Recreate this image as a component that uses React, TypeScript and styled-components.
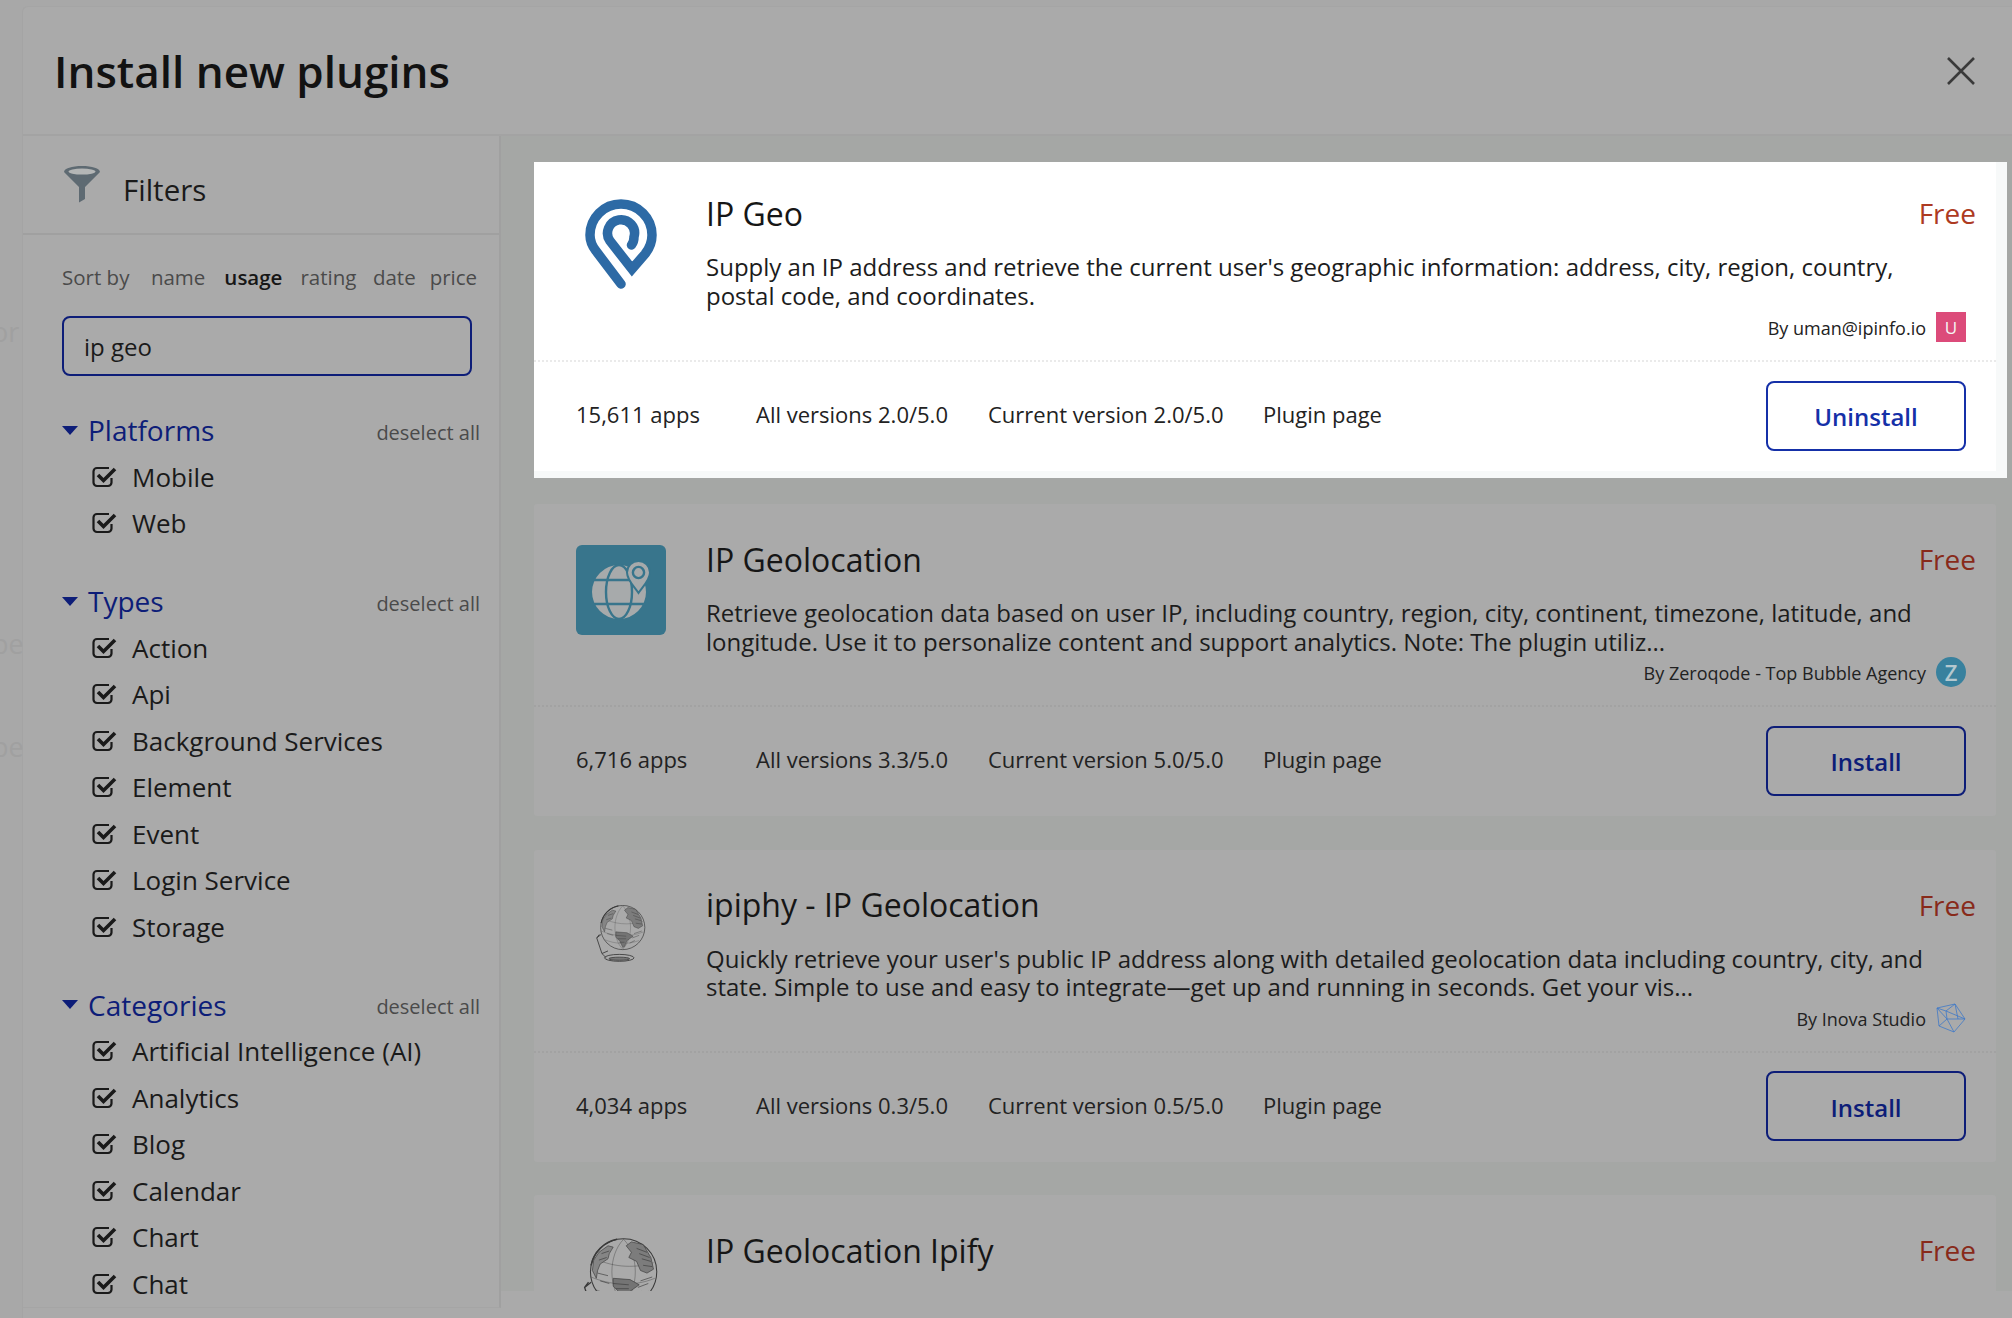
import styled, { createGlobalStyle } from "styled-components"

const GlobalStyle = createGlobalStyle`
  html, body {
    margin: 0;
    padding: 0;
    background: #a8a8a8;
    font-family: "Open Sans", "Liberation Sans", sans-serif;
    color: #1c1c1c;
  }
  * {
    box-sizing: border-box;
  }
`

const NAVY = "#0d1d78"

const Page = styled.div`
  position: relative;
  width: 2012px;
  height: 1318px;
  overflow: hidden;
  padding: 6px 0 0 22px;
`

const Ghost = styled.span<{ $top: number }>`
  position: absolute;
  left: -8px;
  top: ${(p) => p.$top}px;
  font-size: 27px;
  color: #a0a0a0;
`

const Modal = styled.div`
  display: flex;
  flex-direction: column;
  height: 1312px;
  background: #aaaaaa;
  border-top: 1px solid #a5a5a5;
  border-left: 1px solid #a4a4a4;
  border-top-left-radius: 6px;
`

const Header = styled.header`
  flex: none;
  height: 129px;
  display: flex;
  align-items: center;
  justify-content: space-between;
  padding: 0 36px 0 31px;
  border-bottom: 2px solid #a3a3a3;
`

const Heading = styled.h1`
  margin: 0;
  font-size: 44px;
  line-height: 56px;
  font-weight: 600;
  color: #121212;
`

const CloseIcon = styled.svg`
  width: 30px;
  height: 30px;
`

const Body = styled.div`
  flex: 1;
  min-height: 0;
  display: flex;
`

const Sidebar = styled.aside`
  flex: none;
  width: 478px;
  height: 1172px;
  overflow: hidden;
  border-right: 2px solid #a0a0a0;
  border-bottom: 1px solid #a5a5a5;
`

const FilterBar = styled.div`
  height: 99px;
  display: flex;
  align-items: center;
  gap: 23px;
  padding-left: 41px;
  border-bottom: 2px solid #a0a0a0;
`

const FilterTitle = styled.span`
  font-size: 29.5px;
  line-height: 40px;
  margin-top: 10px;
  color: #1a1a1a;
`

const FilterBody = styled.div`
  padding: 28px 19px 0 39px;
`

const SortRow = styled.div`
  display: flex;
  height: 28px;
  align-items: center;
  font-size: 20.5px;
  color: #4a4a4a;
  white-space: nowrap;
`

const SortLabel = styled.span`
  margin-right: 21.5px;
`

const SortItem = styled.span<{ $active?: boolean; $gap: number }>`
  margin-right: ${(p) => p.$gap}px;
  font-weight: ${(p) => (p.$active ? 600 : 400)};
  color: ${(p) => (p.$active ? "#161616" : "#4a4a4a")};
`

const SearchInput = styled.input`
  display: block;
  width: 410px;
  height: 60px;
  margin-top: 25px;
  padding: 0 20px;
  border: 2px solid ${NAVY};
  border-radius: 8px;
  background: transparent;
  font-family: inherit;
  font-size: 24px;
  color: #1a1a1a;
  outline: none;
`

const Section = styled.section`
  margin-top: 30.5px;

  & + & {
    margin-top: 31px;
  }
`

const SectionHead = styled.div`
  height: 47px;
  display: flex;
  align-items: center;
`

const Caret = styled.span`
  width: 0;
  height: 0;
  margin-right: 10px;
  border-left: 8px solid transparent;
  border-right: 8px solid transparent;
  border-top: 9px solid ${NAVY};
`

const SectionTitle = styled.span`
  flex: 1;
  font-size: 28px;
  color: ${NAVY};
`

const Deselect = styled.span`
  font-size: 20px;
  color: #4a4a4a;
  margin-top: 4px;
`

const OptionRow = styled.div`
  height: 46.5px;
  display: flex;
  align-items: center;
  gap: 14px;
  padding-left: 30px;
  font-size: 26px;
  color: #1a1a1a;
`

const List = styled.main`
  flex: 1;
  min-width: 0;
  height: 1155px;
  overflow: hidden;
  padding: 22px 0 0 33px;
  background: #a5a7a5;
`

const Card = styled.article<{ $highlight?: boolean }>`
  width: 1462px;
  height: 312px;
  margin-bottom: 33.4px;
  display: flex;
  flex-direction: column;
  background: ${(p) => (p.$highlight ? "#ffffff" : "#aaaaaa")};
  border-radius: 3px;
  ${(p) =>
    p.$highlight &&
    `
    border-radius: 0;
    height: 313px;
    box-shadow: 11px 7px 0 #f7f9f9, 11px 0 0 #f7f9f9, 0 7px 0 #f7f9f9;
    clip-path: inset(4px -11px -7px 0);
  `}
`

const CardHead = styled.div<{ $highlight?: boolean }>`
  flex: none;
  height: ${(p) => (p.$highlight ? 204 : 203)}px;
  display: flex;
  padding-left: 42px;
  border-bottom: 2px dotted ${(p) => (p.$highlight ? "#eaeaea" : "#a2a2a2")};
`

const IconCell = styled.div<{ $drop: number }>`
  flex: none;
  width: 90px;
  height: 140px;
  margin: 41px 40px 0 0;
  padding-top: ${(p) => p.$drop}px;
  display: flex;
  justify-content: center;
`

const CardMain = styled.div`
  flex: 1;
  min-width: 0;
  display: flex;
  flex-direction: column;
  padding: 32px 20px 0 0;
`

const TitleRow = styled.div`
  display: flex;
  align-items: center;
  justify-content: space-between;
  height: 46px;
`

const PluginName = styled.h2`
  margin: 0;
  font-size: 32px;
  font-weight: 400;
  color: #161616;
`

const Price = styled.span<{ $bright?: boolean }>`
  font-size: 28px;
  color: ${(p) => (p.$bright ? "#ad3a22" : "#882a1a")};
`

const Description = styled.p`
  margin: 17px 0 0;
  width: 1235px;
  font-size: 24px;
  line-height: 28.5px;
  color: #1c1c1c;
`

const Author = styled.div`
  margin: auto 10px 18px 0;
  display: flex;
  justify-content: flex-end;
  align-items: center;
  gap: 10px;
  height: 30px;
  font-size: 18px;
  color: #222;
`

const AuthorName = styled.span`
  margin-top: 2px;
`

const LetterAvatar = styled.span`
  width: 30px;
  height: 30px;
  display: flex;
  align-items: center;
  justify-content: center;
  background: #dc4b7a;
  color: #f5f5f5;
  font-size: 17px;
`

const ZAvatar = styled.span`
  width: 30px;
  height: 30px;
  display: flex;
  align-items: center;
  justify-content: center;
  border-radius: 50%;
  background: #38819e;
  color: #b4c8cf;
  font-size: 22px;
  font-weight: 600;
`

const CardFoot = styled.div`
  flex: 1;
  display: flex;
  align-items: center;
  padding: 0 30px 0 42px;
  font-size: 22px;
  color: #222;
`

const AppCount = styled.span`
  width: 180px;
  margin-bottom: 5px;
`

const Stat = styled.span<{ $width: number }>`
  width: ${(p) => p.$width}px;
  margin-bottom: 5px;
`

const PluginLink = styled.span`
  margin-bottom: 5px;
`

const ActionButton = styled.button<{ $bright?: boolean }>`
  width: 200px;
  height: 70px;
  margin-left: auto;
  margin-bottom: 2px;
  padding-top: 3px;
  border: 2.5px solid ${(p) => (p.$bright ? "#1530a8" : NAVY)};
  border-radius: 8px;
  background: transparent;
  font-family: inherit;
  font-size: 24px;
  font-weight: 600;
  color: ${(p) => (p.$bright ? "#1530a8" : NAVY)};
`

function CheckIcon() {
  return (
    <svg width="26" height="22" viewBox="0 0 26 22" fill="none">
      <path
        d="M17 2H5A3.500 3.500 0 0 0 1.500 5.500v11A3.500 3.500 0 0 0 5 20h11a3.500 3.500 0 0 0 3.500-3.500V12"
        stroke="#1a1a1a"
        strokeWidth="2.2"
      />
      <path d="M6 9l5.500 5.500L23 3" stroke="#1a1a1a" strokeWidth="3.600" />
    </svg>
  )
}

function FunnelIcon() {
  return (
    <svg width="36" height="37" viewBox="0 0 36 37">
      <path
        d="M0 6C0 2.500 8 0 18 0s18 2.500 18 6L21 21v12l-6 3.500V21L0 6z"
        fill="#5e6a72"
      />
      <ellipse cx="18" cy="5.600" rx="13.500" ry="3" fill="#b4b6b6" />
    </svg>
  )
}

function PinLogo() {
  return (
    <svg width="72" height="90" viewBox="0 0 72 90" fill="none">
      <path
        d="M36 85L11 52C7 47 5 42 5 36a31 31 0 0 1 62 0c0 7-3 14-7 19L47 70 25 42a13.500 13.500 0 1 1 24-4c0 3-1 6-2.500 8"
        stroke="#2d6aa5"
        strokeWidth="9.500"
        strokeLinecap="round"
        strokeLinejoin="miter"
      />
    </svg>
  )
}

function GlobeTile() {
  const land = "#a7aaab"
  const tile = "#38758c"
  return (
    <svg width="90" height="90" viewBox="0 0 90 90">
      <rect width="90" height="90" rx="6" fill={tile} />
      <circle cx="43" cy="47" r="27" fill={land} />
      <ellipse cx="43" cy="47" rx="13" ry="27" fill="none" stroke={tile} strokeWidth="2.400" />
      <path d="M16 35h54M16 59h54" stroke={tile} strokeWidth="2.400" />
      <path
        d="M62.500 16a11.500 11.500 0 0 1 11.500 11.500C74 35 66.500 42 62.500 48 58.500 42 51 35 51 27.500A11.500 11.500 0 0 1 62.500 16z"
        fill={land}
        stroke={tile}
        strokeWidth="2"
      />
      <circle cx="62.500" cy="27.500" r="5.600" fill={land} stroke={tile} strokeWidth="2.400" />
    </svg>
  )
}

function SketchGlobe({ size }: { size: number }) {
  return (
    <svg width={size} height={size * 1.2} viewBox="0 0 60 72" fill="none" stroke="#3a3a3a">
      <circle cx="32" cy="26" r="25.500" strokeWidth="0.800" />
      <path d="M7 21a25.500 25.500 0 0 1 20-20" strokeWidth="1.200" />
      <path d="M9 15c12 7 30 9 46 4M7 30c14 6 32 8 49 1M11 40c12 5 26 6 40 1" strokeWidth="0.300" />
      <path d="M32 1c-12 12-12 38 0 50M32 1c12 12 12 38 0 50" strokeWidth="0.300" />
      <path d="M13 11l7-5 4 1-3 5-1 4-6 4-2 5-1 6-3-6 1-8z" fill="#858585" strokeWidth="0.500" />
      <path d="M38 3l9 2 6 10 2 9-5 3-5-2-3-7-6-3 2-4-4-5z" fill="#7c7c7c" strokeWidth="0.500" />
      <path d="M24 31l13 1 7 4-7 5-3 7-2 1-3-7-5-5z" fill="#747474" strokeWidth="0.500" />
      <path
        d="M42 8l8 3M44 12l8 3M46 16l7 2M47 21l7 1M24 35l12 1M26 39l10 0M28 43l6 0M15 12l6-2M13 17l6-2M45 33l9-3M43 38l8-3M40 44l6-3M12 27l8 2M14 33l7 2"
        strokeWidth="0.500"
      />
      <path d="M5 34l-3 4 6 18 5 5M2 38l5-4M8 56l7-3" strokeWidth="1" />
      <ellipse cx="28" cy="61" rx="17" ry="4" strokeWidth="1" />
      <ellipse cx="28" cy="62" rx="12" ry="1.800" strokeWidth="0.900" fill="#777" />
    </svg>
  )
}

function InovaLogo() {
  return (
    <svg width="30" height="30" viewBox="0 0 30 30" fill="none" stroke="#3f78c8" strokeWidth="0.800">
      <path d="M1 5L19 1l10 15-11 13L3 23z" />
      <path d="M1 5l9 3 9-7M10 8l19 8M10 8l1 8-8 7M11 16l7 13M11 16l18 0M19 1l3 15M11 16L1 5" />
    </svg>
  )
}

type Plugin = {
  name: string
  description: string
  author: string
  avatar: React.ReactNode
  icon: React.ReactNode
  drop: number
  apps: string
  all: string
  current: string
  action: string
}

const platforms = ["Mobile", "Web"]
const types = ["Action", "Api", "Background Services", "Element", "Event", "Login Service", "Storage"]
const categories = ["Artificial Intelligence (AI)", "Analytics", "Blog", "Calendar", "Chart", "Chat"]

const plugins: Plugin[] = [
  {
    name: "IP Geo",
    description:
      "Supply an IP address and retrieve the current user's geographic information: address, city, region, country, postal code, and coordinates.",
    author: "By uman@ipinfo.io",
    avatar: <LetterAvatar>U</LetterAvatar>,
    icon: <PinLogo />,
    drop: 0,
    apps: "15,611 apps",
    all: "2.0",
    current: "2.0",
    action: "Uninstall",
  },
  {
    name: "IP Geolocation",
    description:
      "Retrieve geolocation data based on user IP, including country, region, city, continent, timezone, latitude, and longitude. Use it to personalize content and support analytics. Note: The plugin utiliz...",
    author: "By Zeroqode - Top Bubble Agency",
    avatar: <ZAvatar>Z</ZAvatar>,
    icon: <GlobeTile />,
    drop: 0,
    apps: "6,716 apps",
    all: "3.3",
    current: "5.0",
    action: "Install",
  },
  {
    name: "ipiphy - IP Geolocation",
    description:
      "Quickly retrieve your user's public IP address along with detailed geolocation data including country, city, and state. Simple to use and easy to integrate—get up and running in seconds. Get your vis...",
    author: "By Inova Studio",
    avatar: <InovaLogo />,
    icon: <SketchGlobe size={52} />,
    drop: 14,
    apps: "4,034 apps",
    all: "0.3",
    current: "0.5",
    action: "Install",
  },
  {
    name: "IP Geolocation Ipify",
    description: "",
    author: "",
    avatar: null,
    icon: <SketchGlobe size={78} />,
    drop: 2,
    apps: "",
    all: "",
    current: "",
    action: "Install",
  },
]

function FilterSection({ title, options }: { title: string; options: string[] }) {
  return (
    <Section>
      <SectionHead>
        <Caret />
        <SectionTitle>{title}</SectionTitle>
        <Deselect>deselect all</Deselect>
      </SectionHead>
      {options.map((option) => (
        <OptionRow key={option}>
          <CheckIcon />
          {option}
        </OptionRow>
      ))}
    </Section>
  )
}

function PluginCard({ plugin, highlight }: { plugin: Plugin; highlight?: boolean }) {
  return (
    <Card $highlight={highlight}>
      <CardHead $highlight={highlight}>
        <IconCell $drop={plugin.drop}>{plugin.icon}</IconCell>
        <CardMain>
          <TitleRow>
            <PluginName>{plugin.name}</PluginName>
            <Price $bright={highlight}>Free</Price>
          </TitleRow>
          <Description>{plugin.description}</Description>
          <Author>
            <AuthorName>{plugin.author}</AuthorName>
            {plugin.avatar}
          </Author>
        </CardMain>
      </CardHead>
      <CardFoot>
        <AppCount>{plugin.apps}</AppCount>
        <Stat $width={232}>All versions {plugin.all}/5.0</Stat>
        <Stat $width={275}>Current version {plugin.current}/5.0</Stat>
        <PluginLink>Plugin page</PluginLink>
        <ActionButton $bright={highlight}>{plugin.action}</ActionButton>
      </CardFoot>
    </Card>
  )
}

export default function App() {
  return (
    <Page>
      <GlobalStyle />
      <Ghost $top={313}>or</Ghost>
      <Ghost $top={625}>pe</Ghost>
      <Ghost $top={728}>pe</Ghost>
      <Modal>
        <Header>
          <Heading>Install new plugins</Heading>
          <CloseIcon viewBox="0 0 30 30">
            <path d="M2 2l26 26M28 2L2 28" stroke="#3a3a3a" strokeWidth="2.600" />
          </CloseIcon>
        </Header>
        <Body>
          <Sidebar>
            <FilterBar>
              <FunnelIcon />
              <FilterTitle>Filters</FilterTitle>
            </FilterBar>
            <FilterBody>
              <SortRow>
                <SortLabel>Sort by</SortLabel>
                <SortItem $gap={19}>name</SortItem>
                <SortItem $gap={18} $active>
                  usage
                </SortItem>
                <SortItem $gap={16.5}>rating</SortItem>
                <SortItem $gap={14}>date</SortItem>
                <SortItem $gap={0}>price</SortItem>
              </SortRow>
              <SearchInput defaultValue="ip geo" />
              <FilterSection title="Platforms" options={platforms} />
              <FilterSection title="Types" options={types} />
              <FilterSection title="Categories" options={categories} />
            </FilterBody>
          </Sidebar>
          <List>
            {plugins.map((plugin, i) => (
              <PluginCard key={plugin.name} plugin={plugin} highlight={i === 0} />
            ))}
          </List>
        </Body>
      </Modal>
    </Page>
  )
}
